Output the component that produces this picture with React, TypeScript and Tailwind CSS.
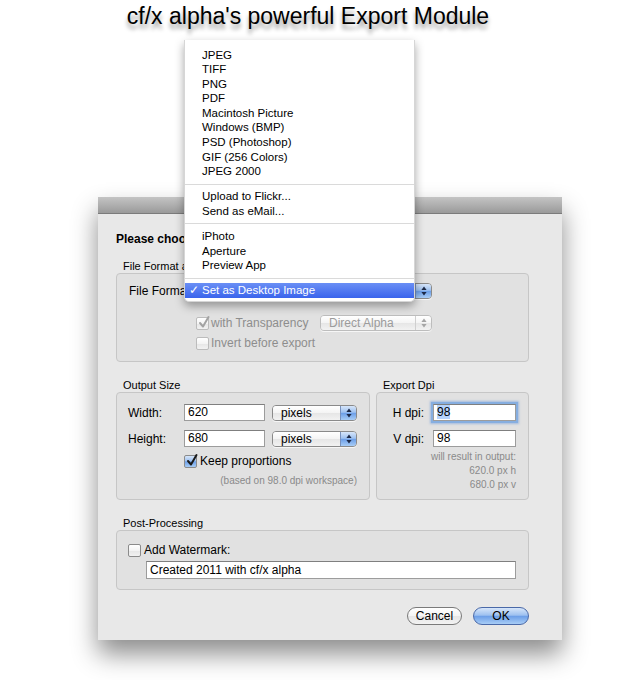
import React from "react";
import clsx from "clsx";

const aquaBlue =
  "bg-[linear-gradient(to_bottom,#d7e6fa_0%,#9ec1f0_45%,#6d9fe8_52%,#a8cdf6_100%)]";
const aquaWhite = "bg-[linear-gradient(to_bottom,#ffffff_0%,#f4f4f4_50%,#e6e6e6_52%,#f2f2f2_100%)]";

const Arrows = ({ color }: { color: string }) => (
  <svg width="6" height="10" viewBox="0 0 6 10">
    <path d="M3 0.5L5.6 4H0.4Z M3 9.5L5.6 6H0.4Z" fill={color} />
  </svg>
);

type PopUpProps = { label: string; className?: string; disabled?: boolean };

const PopUp = ({ label, className, disabled }: PopUpProps) => (
  <div
    className={clsx(
      "flex h-[16px] overflow-hidden rounded-[4px] border shadow-[0_1px_0_rgba(255,255,255,0.7)]",
      disabled ? "border-[#bdbdbd]" : "border-[#8a8a8a]",
      className
    )}
  >
    <div
      className={clsx(
        "flex-1 truncate pl-[8px] text-[12px] leading-[14px]",
        aquaWhite,
        disabled ? "text-[#9b9b9b]" : "text-black"
      )}
    >
      {label}
    </div>
    <div
      className={clsx(
        "flex w-[16px] items-center justify-center border-l",
        disabled ? clsx("border-[#cfcfcf]", aquaWhite) : clsx("border-[#7891bd]", aquaBlue)
      )}
    >
      <Arrows color={disabled ? "#a5a5a5" : "#1d2a48"} />
    </div>
  </div>
);

type CheckProps = { checked?: boolean; disabled?: boolean; blue?: boolean };

const CheckBox = ({ checked, disabled, blue }: CheckProps) => (
  <div
    className={clsx(
      "relative h-[13px] w-[13px] shrink-0 rounded-[2px] border",
      disabled ? "border-[#bcbcbc]" : "border-[#8b8b8b]",
      blue ? aquaBlue : aquaWhite
    )}
  >
    {checked && (
      <svg className="absolute left-[1px] top-[-3px]" width="12" height="14" viewBox="0 0 12 14">
        <path
          d="M2 8 L5 11.5 L10.5 2"
          fill="none"
          stroke={disabled ? "#a3a3a3" : "#1a1a1a"}
          strokeWidth="2"
          strokeLinecap="round"
          strokeLinejoin="round"
        />
      </svg>
    )}
  </div>
);

const TextField = ({ value, className, focused }: { value: string; className?: string; focused?: boolean }) => (
  <div
    className={clsx(
      "h-[17px] border border-[#9c9c9c] border-t-[#7f7f7f] bg-white pl-[3px] text-[12px] leading-[15px] text-black",
      focused && "shadow-[0_0_0_2px_#86aee0,0_0_2px_3px_rgba(120,160,220,0.6)]",
      className
    )}
  >
    {focused ? <span className="bg-[#b6d3fc]">{value}</span> : value}
  </div>
);

const GroupLabel = ({ children, className }: { children: React.ReactNode; className?: string }) => (
  <div className={clsx("pl-[7px] text-[11px] leading-[13px] text-black whitespace-nowrap", className)}>{children}</div>
);

const formats = [
  "JPEG",
  "TIFF",
  "PNG",
  "PDF",
  "Macintosh Picture",
  "Windows (BMP)",
  "PSD (Photoshop)",
  "GIF (256 Colors)",
  "JPEG 2000",
];

const MenuItem = ({ label }: { label: string }) => (
  <div className="h-[14.6px] pl-[17px] text-[11.5px] leading-[14.6px] text-black">{label}</div>
);

const Separator = () => (
  <div className="flex h-[10.5px] items-center">
    <div className="h-px w-full bg-[#dadada]" />
  </div>
);

// popup menu lying open over the dialog
const FormatMenu = () => (
  <div className="absolute left-[184px] top-[40px] w-[231px] rounded-b-[5px] border border-t-0 border-[#d6d6d6] bg-white pb-[3px] pt-[7.5px] shadow-[0_4px_10px_rgba(0,0,0,0.35)]">
    {formats.map((f) => (
      <MenuItem key={f} label={f} />
    ))}
    <Separator />
    <MenuItem label="Upload to Flickr..." />
    <MenuItem label="Send as eMail..." />
    <Separator />
    <MenuItem label="iPhoto" />
    <MenuItem label="Aperture" />
    <MenuItem label="Preview App" />
    <Separator />
    <div className="flex h-[14.6px] items-center bg-[linear-gradient(to_bottom,#6a8ff5,#3a64ec)] text-[11.5px] leading-[14.6px] text-white">
      <span className="w-[17px] pl-[4px]">✓</span>
      <span>Set as Desktop Image</span>
    </div>
  </div>
);

export default function App() {
  return (
    <div className="relative h-[680px] w-[620px] overflow-hidden bg-white font-['Liberation_Sans',Arial,sans-serif]">
      <h1 className="pr-[4px] pt-[2px] text-center text-[23px] leading-[28px] text-black [text-shadow:0_5px_4px_rgba(0,0,0,0.4)]">
        cf/x alpha's powerful Export Module
      </h1>

      <div className="ml-[98px] mt-[167px] w-[464px] shadow-[0_14px_24px_rgba(0,0,0,0.45)]">
        <div className="h-[17px] border-b border-[#7b7b7b] bg-[linear-gradient(to_bottom,#c4c4c4,#9a9a9a)]" />
        <div className="h-[426px] bg-[#e8e8e8] pl-[18px] pt-[18px]">
          <div className="whitespace-nowrap text-[12px] font-bold leading-[14px] text-black">Please choose:</div>

          <GroupLabel className="mt-[14px]">File Format and Options</GroupLabel>
          <div className="h-[89px] w-[413px] rounded-[4px] border border-[#c6c6c6] bg-[#e1e1e1] pl-[12px] pt-[9px]">
            <div className="flex h-[16px] items-center">
              <div className="w-[55px] whitespace-nowrap text-[12px] leading-[14px] text-black">File Format</div>
              {/* its label is hidden by the open menu */}
              <PopUp label="" className="w-[248px]" />
            </div>
            <div className="ml-[67px] mt-[16px] flex h-[16px] items-center">
              <CheckBox checked disabled />
              <span className="ml-[2px] w-[109px] text-[12px] leading-[14px] text-[#8d8d8d]">with Transparency</span>
              <PopUp label="Direct Alpha" className="w-[112px]" disabled />
            </div>
            <div className="ml-[67px] mt-[4px] flex h-[16px] items-center">
              <CheckBox disabled />
              <span className="ml-[2px] text-[12px] leading-[14px] text-[#8d8d8d]">Invert before export</span>
            </div>
          </div>

          <div className="mt-[17px] flex w-[413px] gap-[6px]">
            <div className="w-[254px]">
              <GroupLabel>Output Size</GroupLabel>
              <div className="h-[108px] rounded-[4px] border border-[#c6c6c6] bg-[#e1e1e1] pl-[11px] pt-[11px]">
                <div className="flex h-[17px] items-center">
                  <div className="w-[56px] text-[12px] text-black">Width:</div>
                  <TextField value="620" className="w-[81px]" />
                  <PopUp label="pixels" className="ml-[7px] w-[85px]" />
                </div>
                <div className="mt-[9px] flex h-[17px] items-center">
                  <div className="w-[56px] text-[12px] text-black">Height:</div>
                  <TextField value="680" className="w-[81px]" />
                  <PopUp label="pixels" className="ml-[7px] w-[85px]" />
                </div>
                <div className="ml-[56px] mt-[7px] flex h-[14px] items-center">
                  <CheckBox checked blue />
                  <span className="ml-[3px] text-[12px] leading-[14px] text-black">Keep proportions</span>
                </div>
                <div className="mt-[7px] pr-[12px] text-right text-[10px] leading-[12px] text-[#8a8a8a]">
                  (based on 98.0 dpi workspace)
                </div>
              </div>
            </div>
            <div className="w-[153px]">
              <GroupLabel>Export Dpi</GroupLabel>
              <div className="h-[108px] rounded-[4px] border border-[#c6c6c6] bg-[#e1e1e1] pr-[12px] pt-[11px]">
                <div className="flex h-[17px] items-center justify-end">
                  <span className="text-[12px] text-black">H dpi:</span>
                  <TextField value="98" focused className="ml-[9px] w-[83px]" />
                </div>
                <div className="mt-[9px] flex h-[17px] items-center justify-end">
                  <span className="text-[12px] text-black">V dpi:</span>
                  <TextField value="98" className="ml-[9px] w-[83px]" />
                </div>
                <div className="mt-[3px] text-right text-[10px] leading-[14px] text-[#8a8a8a]">
                  <div>will result in output:</div>
                  <div>620.0 px h</div>
                  <div>680.0 px v</div>
                </div>
              </div>
            </div>
          </div>

          <GroupLabel className="mt-[17px]">Post-Processing</GroupLabel>
          <div className="h-[60px] w-[413px] rounded-[4px] border border-[#c6c6c6] bg-[#e1e1e1] pl-[11px] pt-[12px]">
            <div className="flex h-[14px] items-center">
              <CheckBox />
              <span className="ml-[3px] text-[12px] leading-[14px] text-black">Add Watermark:</span>
            </div>
            <TextField value="Created 2011 with cf/x alpha" className="ml-[18px] mt-[4px] h-[18px] w-[370px] leading-[16px]" />
          </div>

          <div className="mt-[17px] flex w-[413px] justify-end gap-[11px]">
            <button
              className={clsx(
                "h-[18px] w-[55px] rounded-full border border-[#7a7a7a] text-[12px] leading-[16px] text-black",
                aquaWhite
              )}
            >
              Cancel
            </button>
            <button
              className={clsx(
                "h-[18px] w-[56px] rounded-full border border-[#4a69a8] text-[12px] leading-[16px] text-black",
                aquaBlue
              )}
            >
              OK
            </button>
          </div>
        </div>
      </div>

      <FormatMenu />
    </div>
  );
}
